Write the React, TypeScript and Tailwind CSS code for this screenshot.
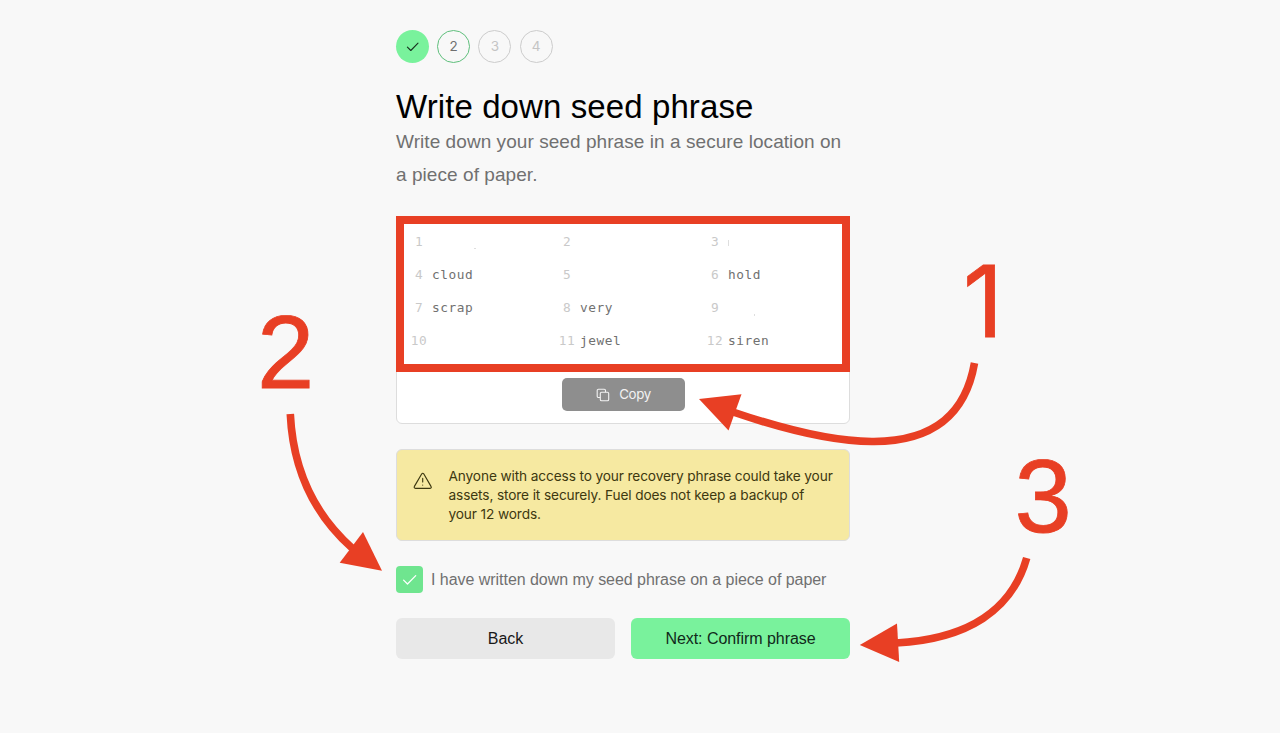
import type { ReactNode } from "react";

const words: [number, string][] = [
  [1, ""], [2, ""], [3, ""],
  [4, "cloud"], [5, ""], [6, "hold"],
  [7, "scrap"], [8, "very"], [9, ""],
  [10, ""], [11, "jewel"], [12, "siren"],
];

function Check({ className }: { className: string }) {
  return (
    <svg viewBox="0 0 14 14" className={className} fill="none" stroke="currentColor" strokeWidth="1.1" strokeLinecap="round" strokeLinejoin="round">
      <path d="M1.4 7.1 4.8 10.5 12 3.2" />
    </svg>
  );
}

function Step({ children, className }: { children: ReactNode; className: string }) {
  return (
    <div className={`flex h-[33px] w-[33px] items-center justify-center rounded-full text-[13.5px] ${className}`}>
      {children}
    </div>
  );
}

function Annotations() {
  return (
    <div className="pointer-events-none absolute inset-0 font-['Liberation_Sans',sans-serif] text-[103px] leading-none text-[#e83f24] [-webkit-text-stroke:0.8px_#e83f24]">
      <svg viewBox="0 0 1280 733" className="absolute left-0 top-0 h-[733px] w-[1280px]">
        <g fill="none" stroke="#e83f24" strokeWidth="7.6">
          <path d="M974.5 363C966 412 936 441 874 441.5C832 442 783 429 733 412" />
          <path d="M290.3 414C293 471 315 515 352 548" />
          <path d="M1026.7 558C1012 610 968 639 896 643" />
        </g>
        <g fill="#e83f24">
          <path d="M699 399 741.5 394.3 728.5 430.5Z" />
          <path d="M382 570.7 363 532 339.7 562.7Z" />
          <path d="M859.8 645 897 623.5 899.2 662Z" />
        </g>
        <g fill="#dedede">
          <rect x="474" y="248" width="2" height="1" />
          <rect x="728" y="240" width="1" height="6" />
          <rect x="754" y="314" width="1" height="2" />
        </g>
      </svg>
      <span className="absolute left-[963px] top-[251.5px] font-[Inter,sans-serif] text-[99px]">1</span>
      <span className="absolute left-[257px] top-[300.5px]">2</span>
      <span className="absolute left-[1014.5px] top-[444.5px]">3</span>
    </div>
  );
}

export default function App() {
  return (
    <div className="relative h-[733px] w-[1280px] overflow-hidden bg-[#f8f8f8] font-[Inter,sans-serif]">
      <main className="ml-[396px] flex w-[454px] flex-col pt-[30px]">
        <div className="flex gap-[8.2px]">
          <Step className="bg-[#79f29c] text-[#18301f]"><Check className="h-[14px] w-[14px]" /></Step>
          <Step className="border border-[#5fbf7c] text-[#707070]">2</Step>
          <Step className="border border-[#cccccc] text-[#c4c4c4]">3</Step>
          <Step className="border border-[#cccccc] text-[#c4c4c4]">4</Step>
        </div>

        <h1 className="mt-[24px] whitespace-nowrap font-['Liberation_Sans',sans-serif] text-[33px] leading-[40px] tracking-[0.1px] text-black">
          Write down seed phrase
        </h1>
        <p className="-mt-[2px] whitespace-nowrap font-['Liberation_Sans',sans-serif] text-[19px] leading-[33px] tracking-[0.06px] text-[#707070]">
          Write down your seed phrase in a secure location on<br />a piece of paper.
        </p>

        <section className="mt-[25px] flex h-[208px] flex-col items-center rounded-[6px] border border-[#dddddd] bg-white">
          <div className="-mt-px grid h-[156px] w-[454px] shrink-0 grid-cols-[148px_148px_1fr] grid-rows-[33px_33px_33px_33px] border-8 border-[#e83f24] pl-[3px] pt-[1px] font-['DejaVu_Sans_Mono',monospace] text-[12.8px] tracking-[0.54px]">
            {words.map(([number, word]) => (
              <div key={number} className="flex items-center">
                <span className="flex w-[25px] justify-center pr-[1px] text-[#c9c9c9]">{number}</span>
                <span className="text-[#717171]">{word}</span>
              </div>
            ))}
          </div>
          <button className="mt-[6px] flex h-[33px] w-[123px] items-center justify-center gap-[9px] rounded-[5px] bg-[#8e8e8e] pl-[1px] text-[13.3px] tracking-[-0.4px] text-[#f2f2f2]">
            <svg viewBox="0 0 14 14" className="h-[14px] w-[14px]" fill="none" stroke="currentColor" strokeWidth="1.1" strokeLinejoin="round">
              <rect x="4.3" y="4.3" width="8.4" height="8.4" rx="1.3" />
              <path d="M4.3 9.5H2.5a1.3 1.3 0 0 1-1.3-1.3V2.5a1.3 1.3 0 0 1 1.3-1.3h5.7a1.3 1.3 0 0 1 1.3 1.3v1.8" />
            </svg>
            Copy
          </button>
        </section>

        <section className="mt-[25px] flex h-[92px] rounded-[6px] border border-[#dddddd] bg-[#f6e9a1] pl-[16px] pt-[16.5px] text-[#3d3810]">
          <svg viewBox="0 0 20 18" className="mt-[5px] h-[18px] w-[20px] shrink-0" fill="none" stroke="currentColor" strokeWidth="1.15" strokeLinecap="round" strokeLinejoin="round">
            <path d="M8.8 1.8 1.4 14.4Q.7 16.1 2.5 16.4H17Q18.9 16.1 18 14.4L10.7 1.8Q9.7.6 8.8 1.8Z" />
            <path d="M9.7 6.4v3.5M9.7 13v.1" />
          </svg>
          <p className="ml-[15.5px] whitespace-nowrap text-[13.7px] leading-[19px] tracking-[-0.13px]">
            Anyone with access to your recovery phrase could take your<br />
            assets, store it securely. Fuel does not keep a backup of<br />
            your 12 words.
          </p>
        </section>

        <label className="mt-[25px] flex h-[27px] items-center gap-[8px] whitespace-nowrap font-['Liberation_Sans',sans-serif] text-[16px] tracking-[-0.04px] text-[#707070]">
          <span className="flex h-[27px] w-[27px] items-center justify-center rounded-[4px] bg-[#6fe58f] text-white">
            <Check className="h-[16px] w-[16px]" />
          </span>
          I have written down my seed phrase on a piece of paper
        </label>

        <div className="mt-[24.5px] grid grid-cols-2 gap-[16px] font-['Liberation_Sans',sans-serif] text-[16px] tracking-[-0.05px]">
          <button className="h-[41.5px] rounded-[6px] bg-[#e8e8e8] pt-[2px] text-[#181818]">Back</button>
          <button className="h-[41.5px] rounded-[6px] bg-[#79f29c] pt-[2px] text-[#10291a]">Next: Confirm phrase</button>
        </div>
      </main>
      <Annotations />
    </div>
  );
}
